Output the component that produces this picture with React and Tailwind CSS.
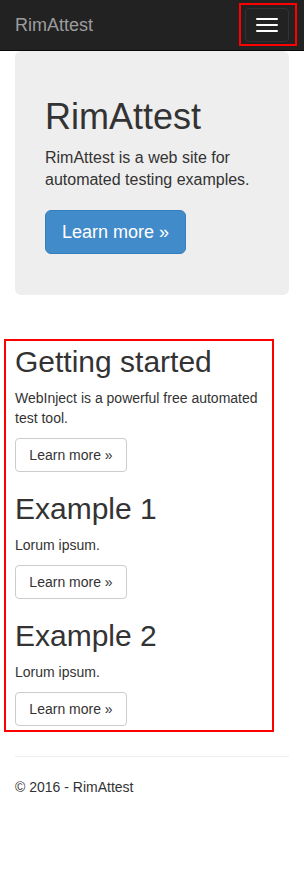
export default function App() {
  const sections = [
    {
      title: "Getting started",
      text: "WebInject is a powerful free automated test tool.",
    },
    { title: "Example 1", text: "Lorum ipsum." },
    { title: "Example 2", text: "Lorum ipsum." },
  ];

  return (
    <div className="min-h-screen bg-white font-['Liberation_Sans',Arial,sans-serif] text-[14px] leading-[20px] text-[#333]">
      {/* Navbar */}
      <nav className="flex h-[51px] items-center justify-between border-b border-[#080808] bg-[#222] pl-[15px]">
        <span className="text-[18px] leading-[20px] text-[#9d9d9d]">RimAttest</span>
        <div className="mr-[7px] mb-[2px] border-2 border-[#f00] pt-[3px] pr-[6px] pb-[2px] pl-[4px]">
          <button className="flex h-[34px] w-[44px] flex-col items-center justify-center gap-[4px] rounded-[4px] border border-[#333]">
            <span className="block h-[2px] w-[22px] rounded-[1px] bg-white" />
            <span className="block h-[2px] w-[22px] rounded-[1px] bg-white" />
            <span className="block h-[2px] w-[22px] rounded-[1px] bg-white" />
          </button>
        </div>
      </nav>

      {/* Jumbotron */}
      <div className="mx-[15px] rounded-[6px] bg-[#eee] px-[30px] pt-[46px] pb-[41px]">
        <h1 className="mb-[10px] text-[36px] leading-[1.1] font-normal">RimAttest</h1>
        <p className="text-[16px] leading-[22.4px]">
          RimAttest is a web site for automated testing examples.
        </p>
        <button className="mt-[19px] flex h-[44px] items-center rounded-[6px] border border-[#357ebd] bg-[#428bca] px-[16px] text-[18px] text-white">
          Learn more »
        </button>
      </div>

      {/* Highlighted content */}
      <div className="mt-[44px] ml-[4px] w-[270px] border-2 border-[#f00] pt-[4px] pb-[4px] pl-[9px]">
        {sections.map((s, i) => (
          <div key={s.title} className={i > 0 ? "mt-[20px]" : ""}>
            <h2 className="mb-[10px] text-[30px] leading-[33px] font-normal">{s.title}</h2>
            <p className="mb-[10px] pr-[4px]">{s.text}</p>
            <button className="h-[34px] w-[112px] rounded-[4px] border border-[#ccc] bg-white text-center text-[14px] text-[#333]">
              Learn more »
            </button>
          </div>
        ))}
      </div>

      {/* Footer */}
      <div className="px-[15px]">
        <hr className="mt-[24px] mb-[20px] border-t border-[#eee]" />
        <p>© 2016 - RimAttest</p>
      </div>
    </div>
  );
}
